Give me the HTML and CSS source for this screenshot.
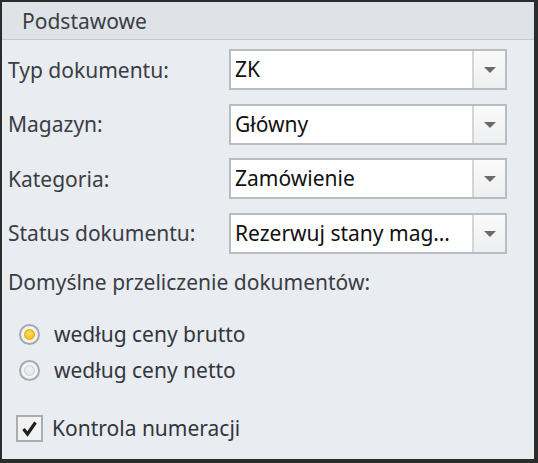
FILE: index.html
```html
<!DOCTYPE html>
<html lang="pl">
<head>
<meta charset="utf-8">
<link rel="stylesheet" href="styles.css">
</head>
<body>
<div class="panel">
  <div class="header">Podstawowe</div>
  <div class="form">
    <div class="row">
      <div class="label">Typ dokumentu:</div>
      <div class="combo"><span class="value">ZK</span><span class="btn"><span class="arrow"></span></span></div>
    </div>
    <div class="row">
      <div class="label">Magazyn:</div>
      <div class="combo"><span class="value">Główny</span><span class="btn"><span class="arrow"></span></span></div>
    </div>
    <div class="row">
      <div class="label">Kategoria:</div>
      <div class="combo"><span class="value">Zamówienie</span><span class="btn"><span class="arrow"></span></span></div>
    </div>
    <div class="row">
      <div class="label">Status dokumentu:</div>
      <div class="combo"><span class="value">Rezerwuj stany mag…</span><span class="btn"><span class="arrow"></span></span></div>
    </div>
    <div class="section">Domyślne przeliczenie dokumentów:</div>
    <div class="radios">
      <div class="opt"><span class="radio on"><span class="dot"></span></span><span class="otext">według ceny brutto</span></div>
      <div class="opt"><span class="radio"><span class="dot"></span></span><span class="otext">według ceny netto</span></div>
    </div>
    <div class="check">
      <span class="box"><svg width="19" height="19" viewBox="0 0 19 19"><path d="M3.5 10 L7.5 15 L15.5 3.5" fill="none" stroke="#1f1f1f" stroke-width="3.2" stroke-linejoin="miter"/></svg></span>
      <span class="ctext">Kontrola numeracji</span>
    </div>
  </div>
</div>
</body>
</html>
```
FILE: styles.css
```css
html, body {
  margin: 0;
  padding: 0;
  background: #ffffff;
}
.panel {
  width: 538px;
  height: 463px;
  box-sizing: border-box;
  border: 2px solid #2c2c2c;
  border-right-width: 4px;
  border-bottom-width: 4px;
  background: #e9ecf0;
  font-family: "Noto Sans", "Open Sans", "DejaVu Sans", sans-serif;
  color: #3a3d44;
  display: flex;
  flex-direction: column;
}
.header {
  height: 38px;
  box-sizing: border-box;
  background: #dfe3e8;
  border-bottom: 1px solid #c3c8ce;
  padding-left: 20px;
  padding-top: 2px;
  font-size: 21px;
  line-height: 35px;
  color: #3b3e45;
}
.form {
  display: flex;
  flex-direction: column;
  padding: 9px 0 0 6px;
}
.row {
  display: flex;
  align-items: center;
  height: 41px;
  margin-bottom: 13.5px;
}
.label {
  width: 221px;
  font-size: 21px;
  white-space: nowrap;
  color: #3a3d44;
}
.combo {
  width: 278px;
  height: 41px;
  box-sizing: border-box;
  border: 2px solid #b9bcc1;
  background: #ffffff;
  display: flex;
  align-items: stretch;
}
.value {
  flex: 1;
  padding-left: 4px;
  font-size: 21px;
  line-height: 37px;
  color: #111111;
  white-space: nowrap;
  overflow: hidden;
}
.btn {
  width: 31px;
  border-left: 2px solid #d3d5d8;
  background: linear-gradient(#fafafa, #eeeff1);
  display: flex;
  align-items: center;
  justify-content: center;
}
.arrow {
  width: 0;
  height: 0;
  border-left: 6px solid transparent;
  border-right: 6px solid transparent;
  border-top: 6px solid #6a6a6a;
  margin-top: 1px;
}
.section {
  margin-top: 1px;
  font-size: 21px;
  line-height: 28px;
  color: #3a3d44;
}
.radios {
  display: flex;
  flex-direction: column;
  margin-top: 20px;
  padding-left: 11px;
}
.opt {
  display: flex;
  align-items: center;
  height: 36px;
}
.radio {
  width: 21px;
  height: 21px;
  box-sizing: border-box;
  border-radius: 50%;
  border: 2px solid #a6a9ae;
  background: #f4f4f4;
  display: flex;
  align-items: center;
  justify-content: center;
  margin-right: 14px;
}
.radio .dot {
  width: 11px;
  height: 11px;
  border-radius: 50%;
  background: radial-gradient(circle at 50% 40%, #f2f2f2, #e0e0e0);
  border: 1px solid #d0d0d0;
  box-sizing: border-box;
}
.radio.on .dot {
  background: radial-gradient(circle at 50% 40%, #ffe36a, #f2b400);
  border-color: #e0a800;
}
.otext {
  font-size: 21px;
  color: #33363d;
}
.check {
  display: flex;
  align-items: center;
  margin-top: 26px;
  padding-left: 8px;
}
.box {
  width: 27px;
  height: 27px;
  box-sizing: border-box;
  border: 2px solid #a9acb1;
  background: #f2f2f2;
  display: flex;
  align-items: center;
  justify-content: center;
  margin-right: 9px;
}
.ctext {
  font-size: 21px;
  color: #33363d;
}
```
